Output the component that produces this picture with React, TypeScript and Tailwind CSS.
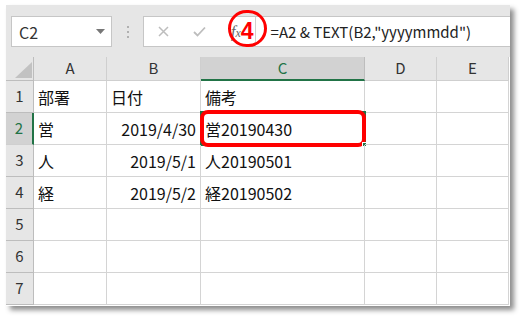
import React from "react";

const cols = [
  { name: "A", w: 73 },
  { name: "B", w: 94 },
  { name: "C", w: 164 },
  { name: "D", w: 72 },
  { name: "E", w: 72 },
];

const data: (string | null)[][] = [
  ["部署", "日付", "備考", null, null],
  ["営", "2019/4/30", "営20190430", null, null],
  ["人", "2019/5/1", "人20190501", null, null],
  ["経", "2019/5/2", "経20190502", null, null],
  [null, null, null, null, null],
  [null, null, null, null, null],
  [null, null, null, null, null],
];

const font = { fontFamily: '"Noto Sans CJK JP", "Noto Sans", sans-serif' };

export default function App() {
  return (
    <div className="w-[521px] h-[317px] bg-white overflow-hidden pt-[5px] pl-[6px]" style={font}>
      <div className="w-[504px] h-[301px] bg-white shadow-[4px_4px_5px_rgba(0,0,0,0.45)] flex flex-col">
        {/* toolbar */}
        <div className="h-[52px] bg-[#e6e6e6] flex items-start pt-[11px] pl-[5px] shrink-0">
          <div className="w-[101px] h-[31px] bg-white border border-[#c6c6c6] flex items-center pl-[7px] pr-[5px] justify-between">
            <span className="text-[16px] text-[#333] leading-none">C2</span>
            <svg width="9" height="5" viewBox="0 0 9 5" className="mr-[1px]">
              <path d="M0 0H9L4.5 5Z" fill="#777" />
            </svg>
          </div>
          <div className="w-[31px] h-[31px] flex flex-col items-center justify-center gap-[3px]">
            <div className="w-[2px] h-[2px] bg-[#b0b0b0]" />
            <div className="w-[2px] h-[2px] bg-[#b0b0b0]" />
            <div className="w-[2px] h-[2px] bg-[#b0b0b0]" />
          </div>
          <div className="flex-1 h-[31px] bg-white border-y border-l border-[#c6c6c6] flex items-center relative">
            <svg width="11" height="11" viewBox="0 0 11 11" className="ml-[14px]">
              <path d="M1 1L10 10M10 1L1 10" stroke="#bdbdbd" strokeWidth="1.5" />
            </svg>
            <svg width="13" height="11" viewBox="0 0 13 11" className="ml-[24px]">
              <path d="M1 6L4.5 9.5L12 1.5" stroke="#bdbdbd" strokeWidth="1.8" fill="none" />
            </svg>
            <span
              className="ml-[25px] text-[16px] italic text-[#666] leading-none whitespace-nowrap"
              style={{ fontFamily: '"Liberation Serif", serif' }}
            >
              f<span className="text-[12px]">x</span>
            </span>
            <span
              className="ml-[0px] text-[23px] font-bold text-[#f00] leading-none"
              style={{ fontFamily: '"Liberation Sans", Arial, sans-serif' }}
            >
              4
            </span>
            <div className="ml-[1px] w-[1px] h-[29px] bg-[#d0d0d0]" />
            <span className="ml-[15px] text-[15px] text-[#222] leading-none whitespace-nowrap">
              =A2 &amp; TEXT(B2,"yyyymmdd")
            </span>
            <div className="absolute left-[84px] top-[-7px] w-[39px] h-[37px] rounded-full border-[3px] border-[#f00]" />
          </div>
        </div>

        {/* grid */}
        <div className="grid grid-cols-[28px_73px_94px_164px_72px_72px] grid-rows-[24px_repeat(7,32px)]">
          <div className="bg-[#e6e6e6] border-r border-b border-[#bdbdbd] relative">
            <svg width="17" height="16" viewBox="0 0 17 16" className="absolute left-[9px] top-[5px]">
              <path d="M17 0V16H0Z" fill="#c2c2c2" />
            </svg>
          </div>
          {cols.map((c) => (
            <div
              key={c.name}
              className={
                c.name === "C"
                  ? "bg-[#d2d2d2] border-r border-[#bdbdbd] border-b-2 border-b-[#217346] flex items-center justify-center text-[15px] text-[#217346]"
                  : "bg-[#e6e6e6] border-r border-b border-[#cfcfcf] flex items-center justify-center text-[15px] text-[#333]"
              }
            >
              {c.name}
            </div>
          ))}
          {data.map((row, ri) => (
            <React.Fragment key={ri}>
              <div
                className={
                  ri === 1
                    ? "bg-[#d2d2d2] border-b border-[#cfcfcf] border-r-2 border-r-[#217346] flex items-center justify-center text-[15px] text-[#217346]"
                    : "bg-[#e6e6e6] border-b border-r border-[#bdbdbd] flex items-center justify-center text-[15px] text-[#333]"
                }
              >
                {ri + 1}
              </div>
              {row.map((v, ci) => {
                const isSel = ri === 1 && ci === 2;
                const right = ci === 1 && ri > 0;
                return (
                  <div
                    key={ci}
                    className={
                      "border-r border-b border-[#d4d4d4] flex items-center text-[16px] text-[#111] whitespace-nowrap relative " +
                      (right ? "justify-end pr-[4px]" : "pl-[4px]")
                    }
                  >
                    {v}
                    {isSel && (
                      <>
                        <div className="absolute left-[-1px] top-[-2px] w-[166px] h-[35px] border-2 border-[#217346]" />
                        <div className="absolute left-[-1px] top-[-3px] w-[166px] h-[37px] rounded-[8px] border-[4px] border-[#f00]" />
                        <div className="absolute right-[-3px] bottom-[-3px] w-[5px] h-[5px] bg-[#217346] border border-white" />
                      </>
                    )}
                  </div>
                );
              })}
            </React.Fragment>
          ))}
        </div>
      </div>
    </div>
  );
}
